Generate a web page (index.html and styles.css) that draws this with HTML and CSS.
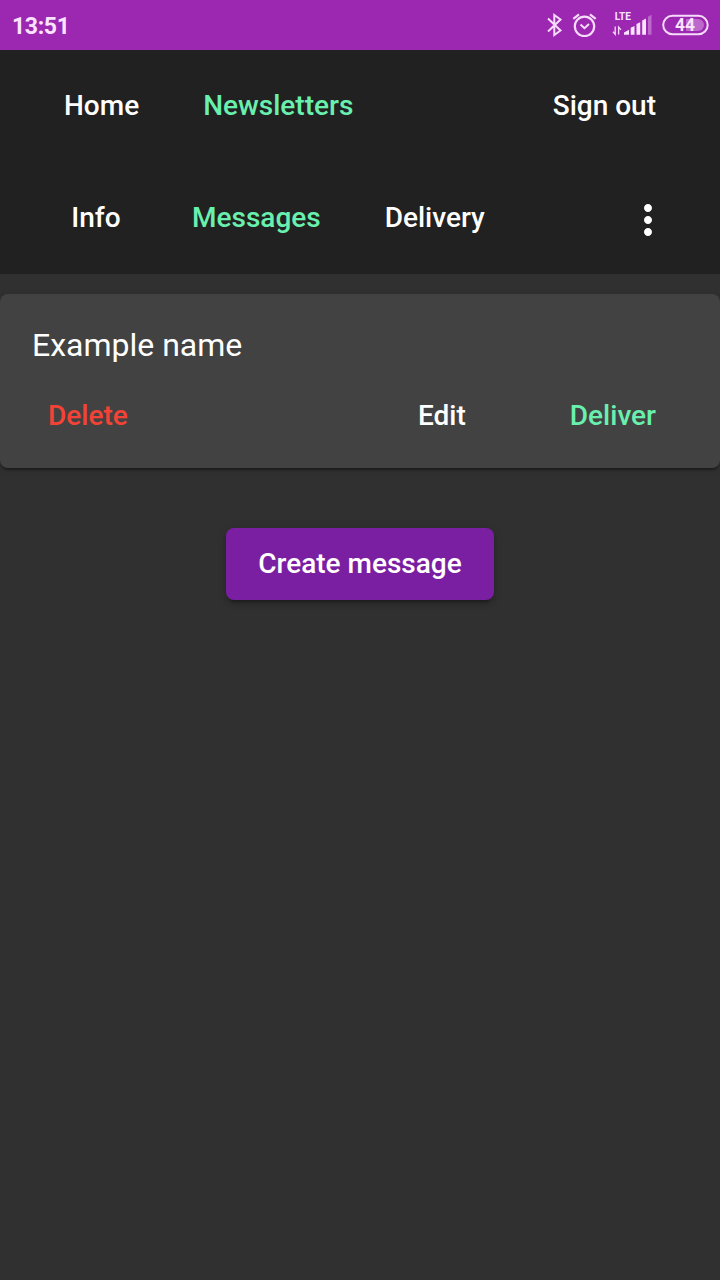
FILE: index.html
```html
<!DOCTYPE html>
<html lang="en">
<head>
<meta charset="utf-8">
<title>Newsletters</title>
<link rel="stylesheet" href="styles.css">
</head>
<body>
<div class="status-bar">
  <span class="clock">13:51</span>
  <svg class="status-icons" width="180" height="50" viewBox="540 0 180 50" fill="none" stroke="#f6dcfa">
    <path d="M548 18.5 L560.5 30.5 L554.3 35 V15 L560.5 19.5 L548 31.5" stroke-width="2"/>
    <circle cx="584.5" cy="26.3" r="9.7" stroke-width="2.2"/>
    <path d="M580.5 24.5 L584.5 28.2 L589 24" stroke-width="2"/>
    <path d="M573.3 18.8 L579 14.3 M590 14.3 L595.7 18.8" stroke-width="2.2"/>
    <text class="network" x="614.7" y="20">LTE</text>
    <path d="M615.2 26.5 V34.3 L613 31.8 M618.6 34.5 V27 L621 29.8" stroke-width="1.3"/>
    <g fill="#fbe3ff" stroke="none">
      <path d="M624 34.7 V32.5 L629 29.7 V34.7Z"/>
      <path d="M630.7 34.7 V27.8 L634.5 26 V34.7Z"/>
      <path d="M636.5 34.7 V24 L640.2 22.3 V34.7Z"/>
      <path d="M642.2 34.7 V20.5 L646 18.5 V34.7Z"/>
      <path d="M648 34.7 V16.8 L651.5 14.8 V34.7Z" opacity=".35"/>
      <path d="M686 19 H698 A6 6 0 0 1 698 31 H686Z" opacity=".35"/>
    </g>
    <rect x="663.2" y="15.7" width="44.5" height="18.6" rx="9.3" stroke-width="2"/>
    <text class="battery" x="675" y="31.2" textLength="20" lengthAdjust="spacingAndGlyphs">44</text>
  </svg>
</div>
<header>
  <nav class="toolbar">
    <a class="button">Home</a>
    <a class="button accent">Newsletters</a>
    <span class="spacer"></span>
    <a class="button">Sign out</a>
  </nav>
  <nav class="toolbar">
    <a class="button">Info</a>
    <a class="button accent">Messages</a>
    <a class="button">Delivery</a>
    <span class="spacer"></span>
    <a class="icon-button" aria-label="More">
      <svg width="48" height="48" viewBox="0 0 24 24" fill="#fff"><path d="M12 8c1.1 0 2-.9 2-2s-.9-2-2-2-2 .9-2 2 .9 2 2 2zm0 2c-1.1 0-2 .9-2 2s.9 2 2 2 2-.9 2-2-.9-2-2-2zm0 6c-1.1 0-2 .9-2 2s.9 2 2 2 2-.9 2-2-.9-2-2-2z"/></svg>
    </a>
  </nav>
</header>
<main>
  <section class="card">
    <div class="card-title">Example name</div>
    <div class="card-actions">
      <a class="button warn">Delete</a>
      <span class="spacer"></span>
      <a class="button">Edit</a>
      <a class="button accent deliver">Deliver</a>
    </div>
  </section>
  <a class="button raised">Create message</a>
</main>
</body>
</html>
```
FILE: styles.css
```css
* { box-sizing: border-box; }
body {
  margin: 0;
  min-height: 1280px;
  background: #303030;
  color: #fff;
  font-family: Roboto, "Liberation Sans", sans-serif;
}
.status-bar {
  display: flex;
  justify-content: space-between;
  height: 50px;
  padding-left: 12px;
  background: #9c27b0;
}
.clock {
  color: #fbe3ff;
  font-size: 23px;
  font-weight: 700;
  line-height: 53px;
  letter-spacing: -.35px;
}
.network {
  fill: #fbe3ff;
  stroke: none;
  font-size: 10px;
  font-weight: 700;
}
.battery {
  fill: #fbe3ff;
  stroke: none;
  font-size: 18px;
  font-weight: 700;
}
header { background: #212121; }
.toolbar {
  display: flex;
  align-items: center;
  height: 112px;
  padding: 0 32px;
}
.spacer { flex: 1; }
.button {
  min-width: 128px;
  padding: 0 32px;
  border-radius: 8px;
  font-size: 28px;
  font-weight: 500;
  line-height: 72px;
  text-align: center;
  white-space: nowrap;
}
.accent { color: #69f0ae; }
.warn { color: #f44336; }
.icon-button {
  display: flex;
  align-items: center;
  justify-content: center;
  width: 80px;
  height: 80px;
  padding-top: 4px;
}
main {
  display: flex;
  flex-direction: column;
  align-items: center;
  padding-top: 20px;
}
.card {
  width: 100%;
  height: 174px;
  padding: 32px 32px 16px;
  border-radius: 8px;
  background: #424242;
  box-shadow: 0 4px 2px -2px rgba(0, 0, 0, .2), 0 2px 2px rgba(0, 0, 0, .14), 0 2px 6px rgba(0, 0, 0, .12);
}
.card-title {
  height: 54px;
  font-size: 32px;
  line-height: 38px;
}
.card-actions {
  display: flex;
  margin-left: -16px;
}
.deliver { margin-left: 32px; }
.raised {
  margin-top: 60px;
  background: #7b1fa2;
  box-shadow: 0 6px 2px -4px rgba(0, 0, 0, .2), 0 4px 4px rgba(0, 0, 0, .14), 0 2px 10px rgba(0, 0, 0, .12);
}
```
